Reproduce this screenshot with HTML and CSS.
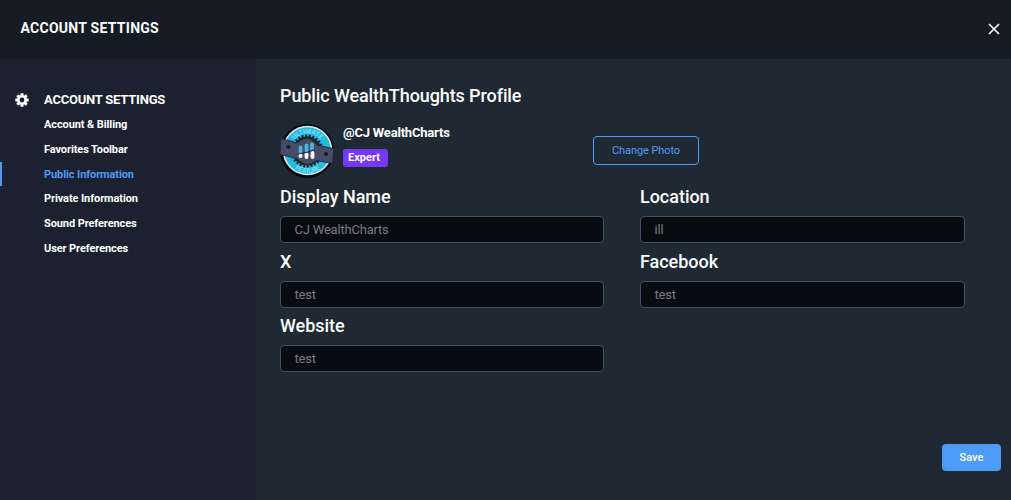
FILE: index.html
```html
<!DOCTYPE html>
<html lang="en">
<head>
  <meta charset="UTF-8">
  <meta name="viewport" content="width=device-width, initial-scale=1.0">
  <title>Account Settings</title>
  <link rel="stylesheet" href="styles.css">
</head>
<body>
  <div class="modal">
    <header class="modal-header">
      <h1>ACCOUNT SETTINGS</h1>
      <button class="close-button" aria-label="Close">
        <svg width="12" height="12" viewBox="0 0 12 12"><path d="M1 1l10 10M11 1L1 11" stroke="#fff" stroke-width="1.6"/></svg>
      </button>
    </header>

    <div class="modal-body">
      <nav class="sidebar">
        <div class="sidebar-title">
          <svg class="gear" width="14" height="14" viewBox="0 0 14 14">
            <g stroke="#fff" stroke-width="3">
              <path d="M7 .3v13.4M.3 7h13.4M2.3 2.3l9.4 9.4M11.7 2.3l-9.4 9.4"/>
            </g>
            <circle cx="7" cy="7" r="5" fill="#fff"/>
            <circle cx="7" cy="7" r="2.4" fill="#1b212e"/>
          </svg>
          <span>ACCOUNT SETTINGS</span>
        </div>
        <ul class="menu">
          <li>Account &amp; Billing</li>
          <li>Favorites Toolbar</li>
          <li class="active">Public Information</li>
          <li>Private Information</li>
          <li>Sound Preferences</li>
          <li>User Preferences</li>
        </ul>
      </nav>

      <main class="content">
        <h2>Public WealthThoughts Profile</h2>

        <div class="profile">
          <svg class="avatar" width="54" height="54" viewBox="0 0 54 54">
            <defs>
              <path id="arc-top" d="M10 27a17.500 17.500 0 0 1 35 0"/>
              <path id="arc-bottom" d="M5.500 27a22 22 0 0 0 44 0"/>
            </defs>
            <circle cx="27" cy="27" r="27" fill="#05080c"/>
            <circle cx="27.5" cy="26.5" r="24" fill="#25bce3" stroke="#dce5ea" stroke-width="1.6"/>
            <circle cx="27" cy="27" r="14.6" fill="#1b2230"/>
            <circle cx="27" cy="27" r="15" fill="none" stroke="#1b2230" stroke-width="3" stroke-dasharray="2 1.6"/>
            <path d="M.500 14.500L13 17.500Q16 20 18.500 18Q27 10.500 35 18.500Q37 22.500 41 22L54 24.500L52.500 39.500L39 37Q36 36 34.500 38Q27 43.500 19.500 37Q16 33.500 12 33.500L0 30.500Z" fill="#444c66" stroke="#1b2230" stroke-width=".8"/>
            <circle cx="8.500" cy="23" r="2.100" fill="#151c2a"/>
            <circle cx="46" cy="30" r="2.100" fill="#151c2a"/>
            <g stroke-linecap="round" stroke-width="3.800">
              <path d="M20.500 23.500v4.500M26.500 21.500v5M32 20.500v5" stroke="#4bb2df"/>
              <path d="M20.500 31.500v.5M26.500 30v3M32.500 29v4" stroke="#fff"/>
            </g>
            <path d="M18 30l5.500-1 5-1 6-2.500" fill="none" stroke="#202b42" stroke-width="1.200"/>
            <text class="badge-text" text-anchor="middle"><textPath href="#arc-top" startOffset="50%">ULTIMATE</textPath></text>
            <text class="badge-text" text-anchor="middle"><textPath href="#arc-bottom" startOffset="50%">FEATURE</textPath></text>
          </svg>
          <div class="user">
            <div class="handle">@CJ WealthCharts</div>
            <span class="rank">Expert</span>
          </div>
          <button class="photo-button">Change Photo</button>
        </div>

        <form class="fields">
          <div class="field">
            <label for="display-name">Display Name</label>
            <input type="text" id="display-name" value="CJ WealthCharts">
          </div>
          <div class="field">
            <label for="location">Location</label>
            <input type="text" id="location" value="ill">
          </div>
          <div class="field">
            <label for="x">X</label>
            <input type="text" id="x" value="test">
          </div>
          <div class="field">
            <label for="facebook">Facebook</label>
            <input type="text" id="facebook" value="test">
          </div>
          <div class="field">
            <label for="website">Website</label>
            <input type="text" id="website" value="test">
          </div>
        </form>

        <button class="save-button">Save</button>
      </main>
    </div>
  </div>
</body>
</html>
```
FILE: styles.css
```css
* {
  box-sizing: border-box;
}
body {
  margin: 0;
  font-family: Roboto, "Liberation Sans", sans-serif;
  color: #fff;
  background: #1f2934;
}
h1, h2, ul {
  margin: 0;
  padding: 0;
}
button, input {
  font-family: inherit;
}
.modal {
  display: flex;
  flex-direction: column;
  height: 500px;
}
.modal-header {
  display: flex;
  align-items: center;
  justify-content: space-between;
  height: 59px;
  padding: 0 11px 4px 20.5px;
  background: #161c25;
}
.modal-header h1 {
  font-size: 14px;
  font-weight: 700;
  letter-spacing: 0.27px;
}
.close-button {
  display: flex;
  padding: 0;
  margin-top: 3px;
  border: none;
  background: none;
  cursor: pointer;
}
.modal-body {
  display: flex;
  flex: 1;
}
.sidebar {
  width: 256px;
  padding-top: 32px;
  background: #1b212e;
}
.sidebar-title {
  display: flex;
  align-items: center;
  gap: 15px;
  height: 17px;
  padding-left: 15px;
  font-size: 13px;
  font-weight: 700;
  letter-spacing: -0.22px;
}
.menu {
  padding-top: 4px;
  list-style: none;
}
.menu li {
  height: 24.75px;
  padding-left: 44px;
  font-size: 11px;
  font-weight: 700;
  letter-spacing: -0.1px;
  line-height: 25px;
}
.menu .active {
  color: #4d9bf8;
  background: linear-gradient(#4d9bf8, #4d9bf8) left bottom / 2px 24px no-repeat;
}
.content {
  display: flex;
  flex: 1;
  flex-direction: column;
  padding: 26px 10px 29px 24px;
  background: #1f2934;
}
.content h2 {
  font-size: 18px;
  font-weight: 500;
  letter-spacing: -0.1px;
  line-height: 22px;
}
.profile {
  display: flex;
  height: 54px;
  margin-top: 17px;
}
.badge-text {
  font-size: 6.5px;
  fill: #a5e8f7;
}
.user {
  width: 250px;
  margin-left: 9px;
}
.handle {
  font-size: 13px;
  font-weight: 700;
  letter-spacing: -0.2px;
  line-height: 17px;
}
.rank {
  display: block;
  width: 45px;
  height: 18px;
  margin-top: 8px;
  padding-left: 5px;
  border-radius: 3px;
  font-size: 11px;
  font-weight: 700;
  line-height: 17px;
  background: #7638fa;
}
.photo-button {
  width: 106px;
  height: 29px;
  margin-top: 12px;
  border: 1px solid #4d9bf8;
  border-radius: 4px;
  font-size: 11px;
  letter-spacing: -0.08px;
  color: #4d9bf8;
  background: none;
  cursor: pointer;
}
.fields {
  display: grid;
  grid-template-columns: 324px 325px;
  grid-auto-rows: 64.7px;
  column-gap: 36px;
  margin-top: 8px;
}
.field label {
  display: block;
  height: 30px;
  font-size: 18px;
  font-weight: 500;
  letter-spacing: -0.03px;
  line-height: 22px;
}
.field input {
  display: block;
  width: 100%;
  height: 27px;
  padding: 0 13.5px;
  border: 1px solid #465060;
  border-radius: 4px;
  font-size: 13px;
  letter-spacing: -0.2px;
  color: #747d8a;
  background: #080b10;
}
.save-button {
  align-self: flex-end;
  width: 59px;
  height: 27px;
  margin-top: auto;
  border: none;
  border-radius: 4px;
  font-size: 11px;
  font-weight: 500;
  color: #fff;
  background: #4d9bf8;
  cursor: pointer;
}
```
